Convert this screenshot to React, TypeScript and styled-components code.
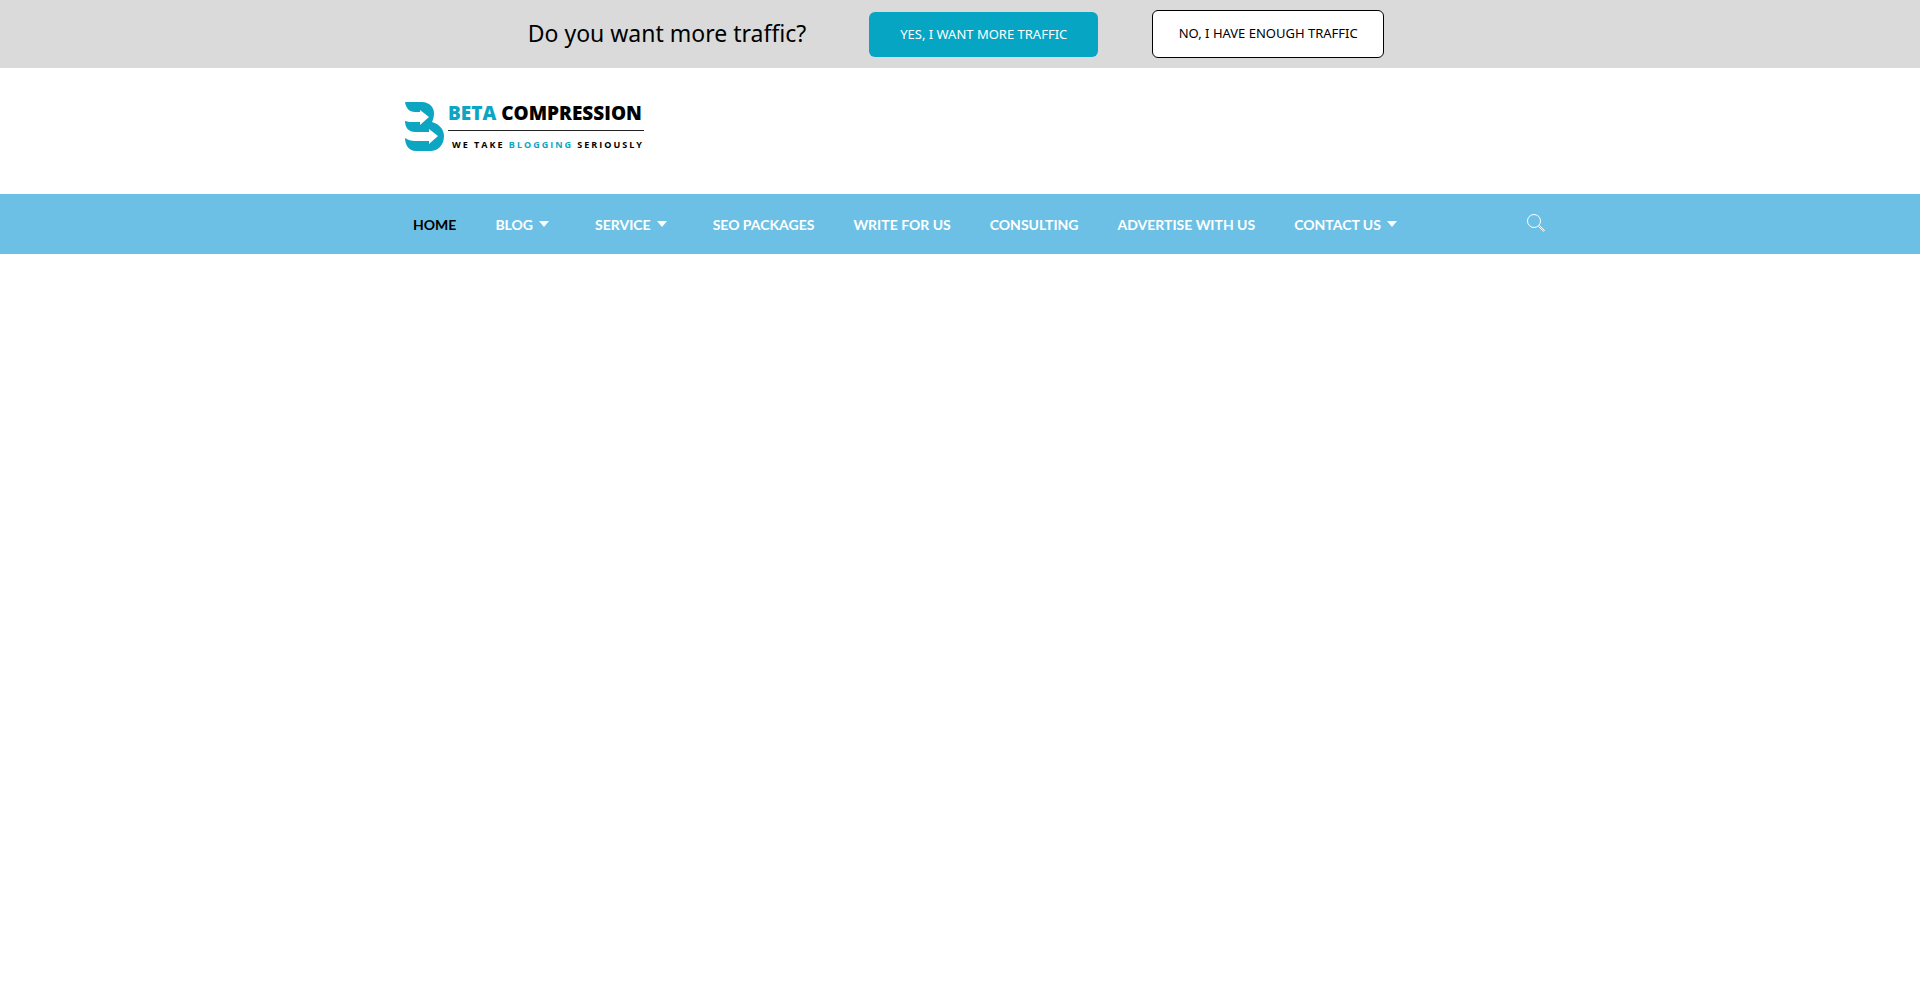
import React from "react";
import styled, { createGlobalStyle } from "styled-components";

const GlobalStyle = createGlobalStyle`
  * { box-sizing: border-box; }
  body { margin: 0; background: #fff; color: #000; font-family: Lato, sans-serif; }
`;

const PromoBar = styled.section`
  display: flex;
  align-items: center;
  justify-content: center;
  min-height: 68px;
  padding-right: 8px;
  background: #dadada;
  font-family: "Noto Sans", sans-serif;
`;

const PromoText = styled.p`
  margin: 0 63px 0 0;
  padding-bottom: 2px;
  font-size: 23px;
  line-height: 32px;
`;

const PromoButton = styled.button<{ $primary?: boolean }>`
  height: ${(p) => (p.$primary ? 45 : 48)}px;
  width: ${(p) => (p.$primary ? 229 : 232)}px;
  margin-right: ${(p) => (p.$primary ? 54 : 0)}px;
  padding: ${(p) => (p.$primary ? "0" : "0 0 2px")};
  border: ${(p) => (p.$primary ? "none" : "1px solid #000")};
  border-radius: 6px;
  background: ${(p) => (p.$primary ? "#06a5c4" : "#fff")};
  color: ${(p) => (p.$primary ? "#fff" : "#000")};
  font-family: inherit;
  font-size: 13px;
  line-height: 20px;
  white-space: nowrap;
  cursor: pointer;
`;

const Container = styled.div`
  display: flex;
  align-items: center;
  width: 100%;
  max-width: 1170px;
  margin: 0 auto;
`;

const Header = styled.header`
  padding: 32px 0 40px;
`;

const Logo = styled.a`
  display: flex;
  align-items: center;
  height: 54px;
  margin-left: 30px;
  color: #000;
  font-family: "Open Sans", sans-serif;
  text-decoration: none;
  white-space: nowrap;
`;

const LogoWords = styled.span`
  display: flex;
  flex-direction: column;
  margin-left: 4px;
`;

const Brand = styled.span`
  padding-bottom: 6px;
  border-bottom: 1px solid #222;
  font-size: 19px;
  font-weight: 800;
  line-height: 22px;
`;

const Tagline = styled.span`
  padding: 6px 0 0 4px;
  font-size: 9px;
  font-weight: 700;
  line-height: 16px;
  letter-spacing: 2px;
`;

const Accent = styled.span`
  color: #0ca5c2;
`;

const NavBar = styled.nav`
  background: #6cc0e5;
`;

const Menu = styled.ul`
  display: flex;
  flex: 1;
  margin: 0;
  padding: 0 0 0 18px;
  list-style: none;
`;

const MenuLink = styled.a<{ $active?: boolean }>`
  display: flex;
  align-items: center;
  height: 60px;
  padding: 2px 19px 0 20px;
  color: ${(p) => (p.$active ? "#000" : "#fff")};
  font-size: 14px;
  font-weight: 700;
  line-height: 20px;
  text-decoration: none;
  white-space: nowrap;
`;

const Caret = styled.span`
  margin: 0 7px 2px 6px;
  border: 5px solid transparent;
  border-top: 6px solid #fff;
  border-bottom: 0;
`;

const SearchButton = styled.button`
  display: flex;
  margin-bottom: 3px;
  padding: 0;
  border: 0;
  background: none;
  color: #fff;
  cursor: pointer;
`;

const items = [
  { label: "HOME", active: true },
  { label: "BLOG", sub: true },
  { label: "SERVICE", sub: true },
  { label: "SEO PACKAGES" },
  { label: "WRITE FOR US" },
  { label: "CONSULTING" },
  { label: "ADVERTISE WITH US" },
  { label: "CONTACT US", sub: true },
];

const LogoMark = () => (
  <svg width="39" height="50" viewBox="0 0 39 50" aria-hidden="true">
    <path
      fill="#0ca5c2"
      d="M0 0H17C24 0 29 5 29 11C29 15 28 18 27 20C34 22 39 27 39 34C39 43 33 49 25 49H11C4 49 0 43 0 36C3 38 6 39 10 39H24V42L33 34L24 27V30H10C4 30 0 26 0 19C3 20 6 20 9 20H15V23L24 15L15 8V10H10C4 10 1 6 0 0Z"
    />
  </svg>
);

export default function App() {
  return (
    <>
      <GlobalStyle />
      <PromoBar>
        <PromoText>Do you want more traffic?</PromoText>
        <PromoButton $primary>YES, I WANT MORE TRAFFIC</PromoButton>
        <PromoButton>NO, I HAVE ENOUGH TRAFFIC</PromoButton>
      </PromoBar>
      <Header>
        <Container>
          <Logo href="#" aria-label="Beta Compression">
            <LogoMark />
            <LogoWords>
              <Brand>
                <Accent>BETA</Accent> COMPRESSION
              </Brand>
              <Tagline>
                WE TAKE <Accent>BLOGGING</Accent> SERIOUSLY
              </Tagline>
            </LogoWords>
          </Logo>
        </Container>
      </Header>
      <NavBar>
        <Container>
          <Menu>
            {items.map((item) => (
              <li key={item.label}>
                <MenuLink href="#" $active={item.active}>
                  {item.label}
                  {item.sub && <Caret />}
                </MenuLink>
              </li>
            ))}
          </Menu>
          <SearchButton aria-label="Search">
            <svg width="18" height="18" viewBox="0 0 18 18" fill="none" stroke="currentColor" strokeWidth="1">
              <circle cx="7" cy="7" r="6.500" />
              <path d="M11.500 12.500L16.500 17.300L17.500 16.300L12.500 11.500" />
            </svg>
          </SearchButton>
        </Container>
      </NavBar>
    </>
  );
}
